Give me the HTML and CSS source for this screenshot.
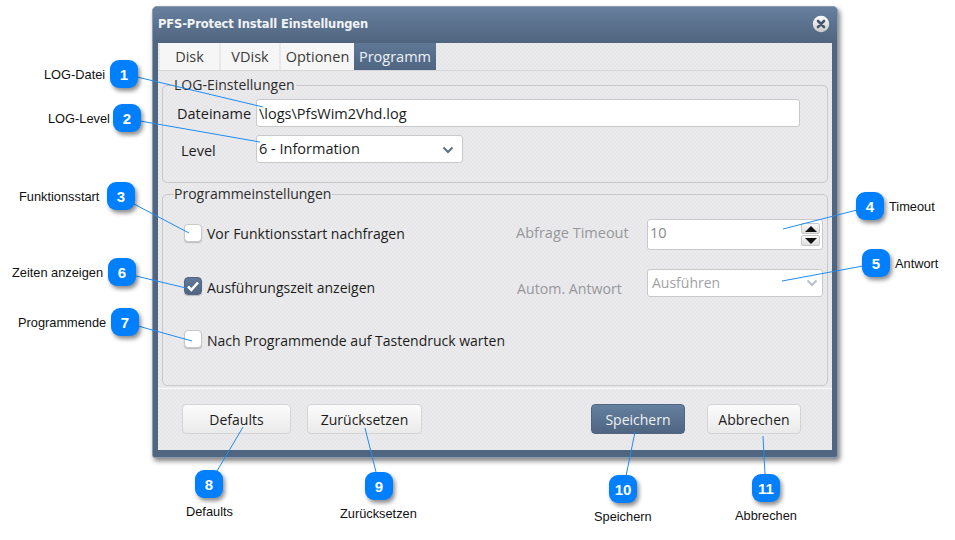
FILE: index.html
```html
<!DOCTYPE html>
<html lang="de">
<head>
<meta charset="utf-8">
<title>PFS-Protect Install Einstellungen</title>
<link rel="stylesheet" href="styles.css">
</head>
<body>
<div class="canvas">
  <section class="dialog">
    <header class="titlebar">
      <span class="title">PFS-Protect Install Einstellungen</span>
      <svg class="close" width="18" height="18" viewBox="0 0 18 18">
        <defs><linearGradient id="cg" x1="0" y1="0" x2="0" y2="1"><stop offset="0" stop-color="#ffffff"/><stop offset="1" stop-color="#c9c9c9"/></linearGradient></defs>
        <circle cx="9" cy="9" r="8.2" fill="url(#cg)"/>
        <path d="M6 6l6 6M12 6l-6 6" stroke="#47566b" stroke-width="2.6" stroke-linecap="round"/>
      </svg>
    </header>
    <nav class="tabs">
      <span class="tab tab-disk">Disk</span>
      <span class="tab tab-vdisk">VDisk</span>
      <span class="tab tab-opt">Optionen</span>
      <span class="tab tab-active">Programm</span>
    </nav>
    <main class="panels">
      <fieldset class="group group-log">
        <legend>LOG-Einstellungen</legend>
        <div class="log-row">
          <span class="log-label">Dateiname</span>
          <div class="field field-file">\logs\PfsWim2Vhd.log</div>
        </div>
        <div class="log-row">
          <span class="log-label log-label-level">Level</span>
          <div class="field field-level">6 - Information
            <svg class="chev" width="12" height="8" viewBox="0 0 12 8"><path d="M1.5 1.5L6 6l4.5-4.5" fill="none" stroke="#5d6f86" stroke-width="2"/></svg>
          </div>
        </div>
      </fieldset>
      <fieldset class="group group-prog">
        <legend>Programmeinstellungen</legend>
        <div class="prog-row prog-row-1">
          <div class="check-wrap"><span class="check"></span><span>Vor Funktionsstart nachfragen</span></div>
          <span class="muted-label">Abfrage Timeout</span>
          <div class="field field-spin"><span class="spin-value">10</span>
            <div class="spin">
              <span class="spin-btn"><svg width="12" height="6" viewBox="0 0 12 6"><path d="M6 0l6 6H0z" fill="#111"/></svg></span>
              <span class="spin-btn"><svg width="12" height="6" viewBox="0 0 12 6"><path d="M0 0h12L6 6z" fill="#111"/></svg></span>
            </div>
          </div>
        </div>
        <div class="prog-row prog-row-2">
          <div class="check-wrap"><span class="check check-on"><svg width="14" height="12" viewBox="0 0 14 12"><path d="M2 6.5l3.4 3.4L12 2.5" fill="none" stroke="#fff" stroke-width="2.6"/></svg></span><span class="check-text">Ausführungszeit anzeigen</span></div>
          <span class="muted-label muted-label-2">Autom. Antwort</span>
          <div class="field field-auto">Ausführen
            <svg class="chev" width="12" height="8" viewBox="0 0 12 8"><path d="M1.5 1.5L6 6l4.5-4.5" fill="none" stroke="#b9c0ca" stroke-width="2"/></svg>
          </div>
        </div>
        <div class="prog-row prog-row-3">
          <div class="check-wrap"><span class="check"></span><span class="check-text">Nach Programmende auf Tastendruck warten</span></div>
        </div>
      </fieldset>
    </main>
    <footer class="actions">
      <span class="btn btn-defaults">Defaults</span>
      <span class="btn btn-reset">Zurücksetzen</span>
      <span class="btn btn-primary">Speichern</span>
      <span class="btn btn-cancel">Abbrechen</span>
    </footer>
  </section>

  <svg class="leaders" width="955" height="540" viewBox="0 0 955 540">
    <g stroke="#1e8cf5" stroke-width="1" fill="none">
      <line x1="137" y1="77" x2="263" y2="107"/>
      <line x1="140" y1="121" x2="260" y2="142"/>
      <line x1="134" y1="204" x2="189" y2="233"/>
      <line x1="136" y1="276" x2="186" y2="288"/>
      <line x1="138" y1="326" x2="192" y2="341"/>
      <line x1="857" y1="210" x2="783" y2="229"/>
      <line x1="863" y1="266" x2="782" y2="281"/>
      <line x1="217" y1="471" x2="243" y2="427"/>
      <line x1="376" y1="472" x2="365" y2="428"/>
      <line x1="626" y1="476" x2="635" y2="432"/>
      <line x1="765" y1="474" x2="763" y2="436"/>
    </g>
  </svg>

  <span class="badge b1">1</span><span class="note n1">LOG-Datei</span>
  <span class="badge b2">2</span><span class="note n2">LOG-Level</span>
  <span class="badge b3">3</span><span class="note n3">Funktionsstart</span>
  <span class="badge b4">4</span><span class="note n4">Timeout</span>
  <span class="badge b5">5</span><span class="note n5">Antwort</span>
  <span class="badge b6">6</span><span class="note n6">Zeiten anzeigen</span>
  <span class="badge b7">7</span><span class="note n7">Programmende</span>
  <span class="badge b8">8</span><span class="note n8">Defaults</span>
  <span class="badge b9">9</span><span class="note n9">Zurücksetzen</span>
  <span class="badge b10">10</span><span class="note n10">Speichern</span>
  <span class="badge b11">11</span><span class="note n11">Abbrechen</span>
</div>
</body>
</html>
```
FILE: styles.css
```css
* { box-sizing: border-box; }
html, body { margin: 0; padding: 0; background: #fff; }
.canvas {
  position: relative;
  width: 955px;
  height: 540px;
  overflow: hidden;
  font-family: "Open Sans", "Noto Sans", sans-serif;
  font-size: 14px;
  color: #1c1c1c;
}

/* window */
.dialog {
  position: absolute;
  left: 152px;
  top: 6px;
  width: 686px;
  height: 452px;
  display: flex;
  flex-direction: column;
  padding: 0 5px 7px;
  border: 1px solid #8b9bb0;
  border-radius: 5px 5px 3px 3px;
  background: #506580;
  box-shadow: 2px 3px 5px rgba(0,0,0,.5);
}
.titlebar {
  height: 36px;
  flex: none;
  margin: 0 -5px;
  padding: 0 7px 3px 5px;
  display: flex;
  align-items: center;
  justify-content: space-between;
  border-radius: 4px 4px 0 0;
  background: linear-gradient(#67809d, #4f647f);
}
.title {
  font-family: "DejaVu Sans", sans-serif;
  font-weight: bold;
  font-size: 11.5px;
  letter-spacing: -0.12px;
  color: #f2f4f7;
}
.close { display: block; }

/* tabs */
.tabs, .panels, .actions {
  background-color: #ebebed;
  background-image:
    linear-gradient(45deg, #e6e6e8 25%, transparent 25%, transparent 75%, #e6e6e8 75%),
    linear-gradient(45deg, #e6e6e8 25%, transparent 25%, transparent 75%, #e6e6e8 75%);
  background-size: 4px 4px;
  background-position: 0 0, 2px 2px;
}
.tabs {
  height: 28px;
  flex: none;
  display: flex;
  padding-left: 2px;
  border-bottom: 1px solid #d6d6d8;
}
.tab {
  display: flex;
  align-items: center;
  justify-content: center;
  height: 27px;
  background: #f6f6f6;
  color: #3c3c3c;
  font-size: 14.5px;
}
.tab-disk { width: 59px; margin-right: 2px; }
.tab-vdisk { width: 58px; margin-right: 2px; }
.tab-opt { width: 73px; }
.tab-active {
  width: 82px;
  color: #eef1f5;
  background: linear-gradient(#5f7896, #4f6582);
}

/* groups */
.panels {
  flex: 1;
  padding: 5px 4px 0;
  min-height: 0;
}
.group {
  margin: 0;
  padding: 0;
  min-width: 0;
  border: 1px solid #c8c8ca;
  border-radius: 5px;
}
.group legend {
  margin-left: 11px;
  padding: 0 1px 0 0;
  line-height: 18px;
  font-size: 14px;
  color: #2d2d2d;
}
.group-log { height: 107px; }
.group-prog { height: 201px; margin-top: 2px; }

.log-row {
  display: flex;
  align-items: center;
  margin-top: 5px;
  padding-left: 14px;
}
.log-row + .log-row { margin-top: 8px; }
.log-label { width: 79px; font-size: 14.5px; color: #1c1c1c; }
.log-label-level { padding-left: 4px; padding-top: 2px; }

.field {
  display: flex;
  align-items: center;
  background: #fff;
  border: 1px solid #c9c9c9;
  border-radius: 3px;
  color: #1c1c1c;
  font-size: 14.5px;
}
.field-file { width: 544px; height: 28px; padding-left: 2px; }
.field-level { width: 207px; height: 28px; padding: 0 8px 1px 2px; justify-content: space-between; }
.chev { display: block; margin-top: 2px; }

.prog-row {
  display: flex;
  padding: 0 4px 0 21px;
  align-items: flex-start;
}
.prog-row-1 { margin-top: 16px; height: 31px; }
.prog-row-2 { margin-top: 19px; height: 28px; }
.prog-row-3 { margin-top: 33px; }

.check-wrap {
  flex: 1;
  display: flex;
  align-items: center;
  gap: 5px;
  height: 18px;
  font-size: 14px;
  color: #1c1c1c;
}
.prog-row-1 .check-wrap { margin-top: 5px; }
.prog-row-2 .check-wrap { margin-top: 8px; }
.check-text { padding-top: 2px; }
.check {
  width: 18px;
  height: 18px;
  flex: none;
  display: flex;
  align-items: center;
  justify-content: center;
  background: #fff;
  border: 1px solid #c8c8c8;
  border-radius: 4px;
  box-shadow: 0 1px 1px rgba(0,0,0,.2);
}
.check-on {
  background: linear-gradient(#617a98, #4f6582);
  border-color: #506580;
}
.muted-label {
  width: 131px;
  height: 18px;
  margin-top: 4px;
  font-size: 14.5px;
  line-height: 20px;
  color: #97979b;
}
.muted-label-2 { margin-top: 10px; padding-left: 1px; font-size: 14.2px; }
.field-spin {
  width: 176px;
  height: 31px;
  padding: 0 2px 0 2px;
  color: #8a8a8a;
  justify-content: space-between;
}
.spin-value { margin-bottom: 4px; }
.spin { display: flex; flex-direction: column; gap: 1px; }
.spin-btn {
  width: 19px;
  height: 11px;
  display: flex;
  align-items: center;
  justify-content: center;
  background: linear-gradient(#fafafa, #dedede);
  border: 1px solid #c8c8c8;
  border-radius: 2px;
}
.field-auto {
  width: 176px;
  height: 28px;
  padding: 0 4px 2px 4px;
  font-size: 14px;
  color: #a2a2a6;
  justify-content: space-between;
}

/* footer */
.actions {
  height: 62px;
  flex: none;
  display: flex;
  align-items: flex-start;
  padding: 15px 0 0 24px;
  border-top: 1px solid #fafafa;
}
.btn {
  height: 30px;
  display: flex;
  align-items: center;
  justify-content: center;
  border: 1px solid #d4d4d6;
  border-radius: 4px;
  background: linear-gradient(#fcfcfc, #eaeaea);
  color: #1c1c1c;
  font-size: 14px;
}
.btn-defaults { width: 109px; margin-right: 16px; }
.btn-reset { width: 115px; margin-right: 169px; }
.btn-primary {
  width: 94px;
  margin-right: 22px;
  color: #eef1f5;
  border-color: #4f6582;
  background: linear-gradient(#64809e, #4f6582);
}
.btn-cancel { width: 94px; }

/* annotations */
.leaders { position: absolute; left: 0; top: 0; pointer-events: none; }
.badge {
  position: absolute;
  width: 28px;
  height: 28px;
  display: flex;
  align-items: center;
  justify-content: center;
  border-radius: 9px;
  background: #007fff;
  color: #fff;
  font-family: "Liberation Sans Narrow", "Liberation Sans", sans-serif;
  font-weight: bold;
  font-size: 15px;
  box-shadow: 2px 3px 4px rgba(0,0,0,.45);
}
.note {
  position: absolute;
  font-family: "Liberation Sans", sans-serif;
  font-size: 12.8px;
  line-height: 14px;
  color: #111;
  white-space: nowrap;
}
.b1 { left: 110px; top: 60px; }
.b2 { left: 113px; top: 104px; }
.b3 { left: 107px; top: 182px; }
.b4 { left: 856px; top: 192px; }
.b5 { left: 862px; top: 249px; }
.b6 { left: 108px; top: 258px; }
.b7 { left: 111px; top: 308px; }
.b8 { left: 195px; top: 470px; }
.b9 { left: 365px; top: 472px; }
.b10 { left: 609px; top: 475px; }
.b11 { left: 752px; top: 474px; }
.n1 { left: 44px; top: 68px; }
.n2 { left: 48px; top: 112px; }
.n3 { left: 19px; top: 190px; }
.n4 { left: 889px; top: 200px; }
.n5 { left: 895px; top: 257px; }
.n6 { left: 12px; top: 266px; }
.n7 { left: 18px; top: 316px; }
.n8 { left: 186px; top: 505px; }
.n9 { left: 340px; top: 507px; }
.n10 { left: 594px; top: 510px; }
.n11 { left: 735px; top: 509px; }
```
